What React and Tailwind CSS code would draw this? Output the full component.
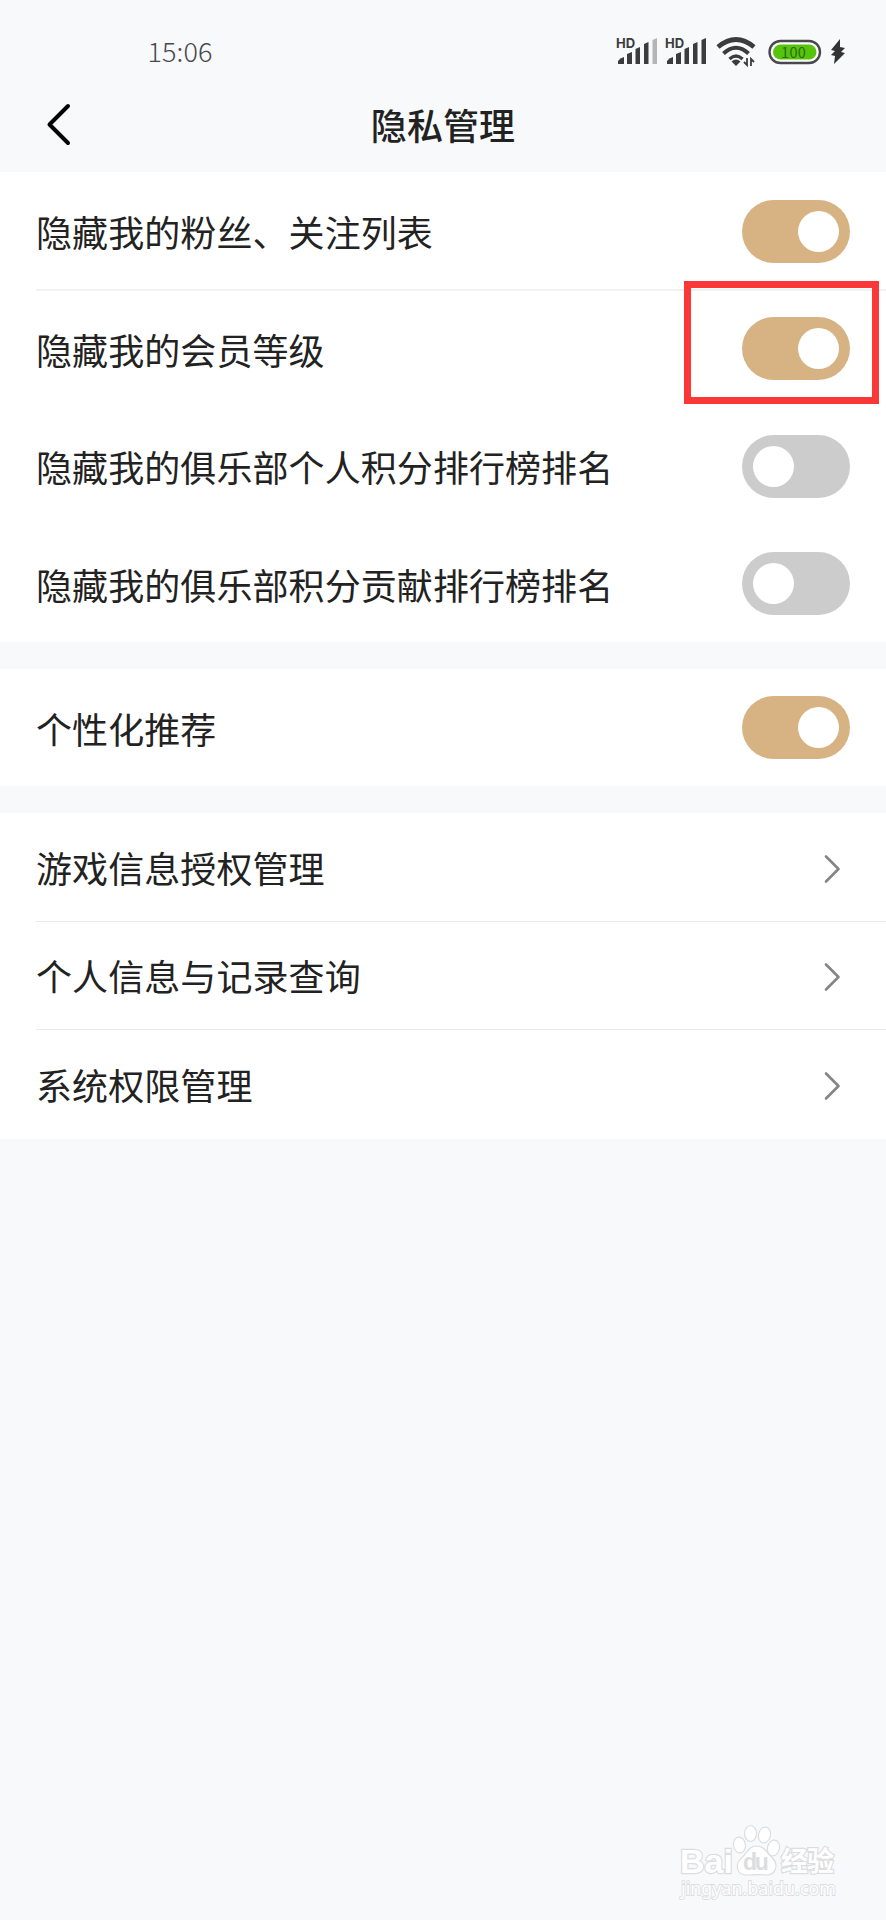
function Toggle({ on }) {
  return (
    <span
      className={
        on
          ? "flex h-[63px] w-[108px] items-center justify-end rounded-full bg-[#d7b283] px-[11px]"
          : "flex h-[63px] w-[108px] items-center justify-start rounded-full bg-[#cccccc] px-[11px]"
      }
    >
      <span className="size-[41px] rounded-full bg-white" />
    </span>
  );
}

function ToggleRow({ label, on, divider, marked, height = "h-[117px]" }) {
  return (
    <div className={`relative flex ${height} items-center pl-9`}>
      <div className="flex h-full flex-1 items-center justify-between pr-9">
        <span>{label}</span>
        <Toggle on={on} />
      </div>
      {divider && <div className="absolute right-0 -bottom-px left-9 h-[2px] bg-[#f2f2f3]" />}
      {marked && (
        <div className="absolute -top-[9px] right-[7px] z-10 h-[123px] w-[195px] border-7 border-[#fc3737]" />
      )}
    </div>
  );
}

function LinkRow({ label, divider, height = "h-[108px]" }) {
  return (
    <div className={`flex ${height} pl-9`}>
      <div
        className={
          divider
            ? "flex flex-1 items-center justify-between border-b border-[#ebebec] pr-[45px]"
            : "flex flex-1 items-center justify-between pr-[45px]"
        }
      >
        <span className="pb-px">{label}</span>
        <svg className="mt-[3px]" width="18" height="30" viewBox="0 0 18 30" fill="none" stroke="#858585" strokeWidth="2.6" strokeLinecap="round" strokeLinejoin="round">
          <path d="M3 2.500 15.500 15 3 27.500" />
        </svg>
      </div>
    </div>
  );
}

function Signal({ weak }) {
  return (
    <svg width="42" height="32" viewBox="0 0 42 32" fill="#3c3c3f">
      <text x="0" y="12" fontSize="13" fontWeight="700" fontFamily="Inter, sans-serif">HD</text>
      <path d="M2 28v-3q2-3 6-4v7z" />
      <path d="M11 28V18l5-2v12z" />
      <path d="M19.500 28V13l4.500-2v17z" />
      <path d="M28 28V8l4.500-2v22z" />
      <path d="M36.500 28V4L41 2v26z" fill={weak ? "#b5b5b8" : "#3c3c3f"} />
    </svg>
  );
}

function StatusBar() {
  return (
    <div className="flex h-[84px] items-center justify-between pt-5 pr-[40px] pl-[140px] text-[#48484a]">
      <svg width="80" height="48" viewBox="0 0 80 48">
        <text x="7.500" y="33.500" fontSize="27" textLength="65" fontFamily="'Noto Sans CJK SC', sans-serif" fontWeight="300" fill="#48484a">15:06</text>
      </svg>
      <div className="flex items-center">
        <Signal weak />
        <span className="w-[7px]" />
        <Signal />
        <svg className="ml-[9px]" width="40" height="32" viewBox="0 0 40 32" fill="none" stroke="#3c3c3f">
          <path d="M2 11Q20-4 38 11" strokeWidth="4.800" />
          <path d="M7.500 17.500Q20 6 32.500 17.500" strokeWidth="4" />
          <path d="M13.500 23Q20 17 26.500 23" strokeWidth="3.400" />
          <path d="M15.500 25.500q4.500-4 9 0L20 30z" fill="#3c3c3f" stroke="none" />
          <path d="M31 22v7l-3-3M35 30v-7l3 3" strokeWidth="1.800" />
        </svg>
        <svg className="ml-[12px]" width="54" height="26" viewBox="0 0 54 26">
          <rect x="1.500" y="2" width="50.500" height="22" rx="11" fill="#fff" stroke="#48484c" strokeWidth="2.400" />
          <rect x="5" y="5.500" width="43.500" height="15" rx="7.500" fill="#55c40a" />
          <text x="13" y="18.500" fontSize="14.500" textLength="25" fontFamily="'Noto Sans CJK SC', sans-serif" fontWeight="400" fill="#2b6a12">100</text>
        </svg>
        <svg className="ml-[8px]" width="16" height="26" viewBox="0 0 16 26" fill="#333336">
          <path d="M10 0 1 11l4 1-4 4 4 1-1 8 11-11-4-1 4-4-5-1z" />
        </svg>
      </div>
    </div>
  );
}

function Watermark() {
  return (
    <svg className="absolute right-[40px] bottom-[8px]" width="170" height="92" viewBox="0 0 170 92" fill="#fff" stroke="#dcdddf" strokeWidth="1.2">
      <g paintOrder="stroke" strokeWidth="2.4">
        <text x="4" y="53" fontSize="34" fontWeight="700" textLength="53" lengthAdjust="spacingAndGlyphs" fontFamily="'Liberation Sans', sans-serif">Bai</text>
        <text x="105" y="51" fontSize="27" fontWeight="700" textLength="53" fontFamily="'Noto Sans CJK SC', sans-serif">经验</text>
        <text x="5" y="75" fontSize="18.500" textLength="155" lengthAdjust="spacingAndGlyphs" strokeWidth="1.8" fontFamily="'Noto Sans', sans-serif">jingyan.baidu.com</text>
      </g>
      <ellipse cx="63.500" cy="25" rx="6" ry="8" transform="rotate(-8 63.500 25)" />
      <ellipse cx="74.500" cy="13.500" rx="6" ry="8" />
      <ellipse cx="88.500" cy="15" rx="6" ry="8" transform="rotate(12 88.500 15)" />
      <ellipse cx="97.500" cy="28" rx="6" ry="8" transform="rotate(12 97.500 28)" />
      <path d="M80.500 26c-8 0-10 8-15 12-6 5-6 16 4 17 7 0 14-1 21 0 10 0 12-11 6-17-6-5-8-12-16-12z" />
      <text x="67" y="50" fontSize="23" fontWeight="700" textLength="26" fill="#dcdddf" stroke="none" fontFamily="'Liberation Sans', sans-serif">du</text>
    </svg>
  );
}

export default function App() {
  return (
    <div className="relative flex min-h-[1920px] w-full flex-col bg-[#f8f9fb] font-['Noto_Sans_CJK_SC',sans-serif] text-[36px] leading-none font-normal tracking-[0.08px] text-[#222222]">
      <StatusBar />
      <header className="grid h-[88px] grid-cols-[1fr_auto_1fr] items-center pb-[9px]">
        <svg className="ml-[43px]" width="30" height="46" viewBox="0 0 30 46" fill="none" stroke="#050505" strokeWidth="4" strokeLinecap="round" strokeLinejoin="round">
          <path d="M25 5 6.500 23.500 25 42" />
        </svg>
        <h1 className="font-medium">隐私管理</h1>
      </header>
      <section className="bg-white">
        <ToggleRow label="隐藏我的粉丝、关注列表" on divider height="h-[118px]" />
        <ToggleRow label="隐藏我的会员等级" on marked />
        <ToggleRow label="隐藏我的俱乐部个人积分排行榜排名" height="h-[118px]" />
        <ToggleRow label="隐藏我的俱乐部积分贡献排行榜排名" />
      </section>
      <section className="mt-[27px] bg-white">
        <ToggleRow label="个性化推荐" on />
      </section>
      <section className="mt-[27px] bg-white">
        <LinkRow label="游戏信息授权管理" divider height="h-[109px]" />
        <LinkRow label="个人信息与记录查询" divider />
        <LinkRow label="系统权限管理" height="h-[109px]" />
      </section>
      <Watermark />
    </div>
  );
}
